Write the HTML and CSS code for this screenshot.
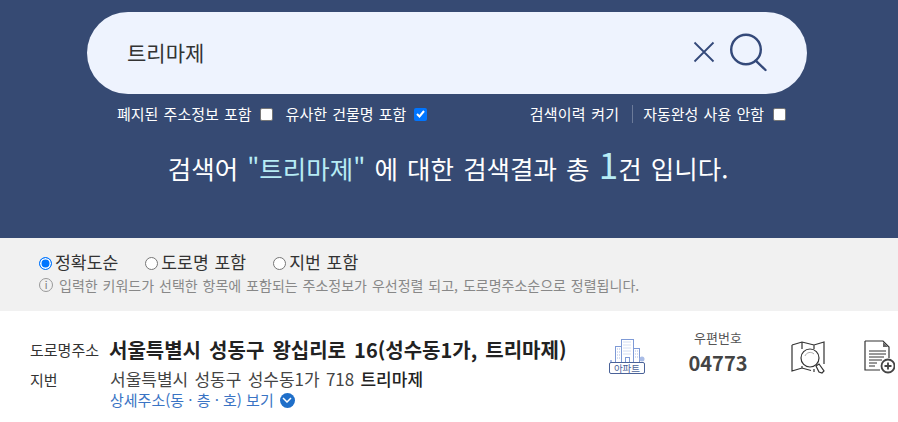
FILE: index.html
```html
<!DOCTYPE html>
<html lang="ko">
<head>
  <meta charset="UTF-8">
  <meta name="viewport" content="width=device-width, initial-scale=1.0">
  <title>도로명주소 검색</title>
  <link rel="stylesheet" href="styles.css">
</head>
<body>
  <header class="search-head">
    <div class="search-box">
      <span class="search-word">트리마제</span>
      <svg class="icon-clear" width="24" height="24" viewBox="0 0 24 24"><path d="M2.500 1.500L21.500 20.500M21.500 1.500L2.500 20.500" fill="none" stroke="#34497a" stroke-width="1.800"/></svg>
      <svg class="icon-search" width="40" height="40" viewBox="0 0 40 40"><circle cx="19" cy="16.500" r="14.800" fill="none" stroke="#34497a" stroke-width="2.400"/><path d="M28.700 27.700L38.500 37" fill="none" stroke="#34497a" stroke-width="2.400" stroke-linecap="round"/></svg>
    </div>
    <div class="search-options">
      <div class="option-group">
        <label class="option">폐지된 주소정보 포함 <span class="check"></span></label>
        <label class="option">유사한 건물명 포함 <span class="check on"><svg width="9" height="8" viewBox="0 0 9 8"><path d="M1 4L3.500 6.500L8 1" fill="none" stroke="#fff" stroke-width="2"/></svg></span></label>
      </div>
      <div class="option-group right">
        <span class="option history">검색이력 켜기</span>
        <label class="option">자동완성 사용 안함 <span class="check"></span></label>
      </div>
    </div>
    <p class="result-line">검색어 <em>"트리마제"</em> 에 대한 검색결과 총 <strong>1</strong>건 입니다.</p>
  </header>

  <section class="sort-bar">
    <div class="sort-options">
      <label class="radio-item"><span class="radio on"></span>정확도순</label>
      <label class="radio-item"><span class="radio"></span>도로명 포함</label>
      <label class="radio-item"><span class="radio"></span>지번 포함</label>
    </div>
    <p class="sort-note"><span class="info-mark">i</span>입력한 키워드가 선택한 항목에 포함되는 주소정보가 우선정렬 되고, 도로명주소순으로 정렬됩니다.</p>
  </section>

  <section class="result-row">
    <div class="addr">
      <div class="addr-line road">
        <span class="addr-label">도로명주소</span>
        <span class="addr-road">서울특별시 성동구 왕십리로 16(성수동1가, 트리마제)</span>
      </div>
      <div class="addr-line jibun">
        <span class="addr-label">지번</span>
        <div>
          <div class="addr-jibun">서울특별시 성동구 성수동1가 718 <span class="bld">트리마제</span></div>
          <div class="addr-more">상세주소(동 · 층 · 호) 보기 <span class="more-btn"><svg width="10" height="6" viewBox="0 0 10 6"><path d="M1 1L5 5L9 1" fill="none" stroke="#fff" stroke-width="1.500"/></svg></span></div>
        </div>
      </div>
    </div>

    <div class="apt">
      <svg width="36" height="24" viewBox="0 0 36 24">
        <g fill="#fff" stroke="#7e9ad6" stroke-width="1">
          <rect x="6.500" y="7.500" width="6" height="16"/>
          <rect x="24.500" y="9.500" width="6" height="14"/>
          <rect x="12.500" y="0.500" width="12" height="23"/>
          <rect x="16.500" y="18.500" width="4" height="5"/>
        </g>
        <path d="M8 10h3M8 13h3M8 16h3M8 19h3M26 12h3M26 15h3M26 18h3M14.500 3h8M14.500 6h8M14.500 9h8M14.500 12h8M14.500 15h8" stroke="#a9bce6" stroke-width="1" stroke-dasharray="1 1"/>
        <circle cx="33" cy="20" r="2.500" fill="#a9bce6"/>
        <rect x="1" y="21" width="2" height="3" fill="#a9bce6"/>
      </svg>
      <span class="apt-tag">아파트</span>
    </div>

    <div class="zip">
      <span class="zip-label">우편번호</span>
      <span class="zip-num">04773</span>
    </div>

    <svg class="icon-map" width="36" height="34" viewBox="0 0 36 34">
      <path d="M1 4L11 1L23 4L33 1V23M1 4V30L11 27L20 29.500M11 1V8M23 4V8M11 25V27M23 28V31" fill="none" stroke="#333" stroke-width="1.200"/>
      <circle cx="19" cy="17" r="9" fill="#fff" stroke="#333" stroke-width="1.200"/>
      <path d="M14 15a5.500 5.500 0 0 1 9 -2" fill="none" stroke="#aaa"/>
      <path d="M25 25L28 23L33 30L31 32L28 31Z" fill="#fff" stroke="#333" stroke-width="1.200"/>
    </svg>

    <svg class="icon-doc" width="31" height="34" viewBox="0 0 31 34">
      <path d="M1 1H19L25 7V18M1 1V30H16" fill="none" stroke="#333" stroke-width="1.200"/>
      <path d="M19 2V7H24Z" fill="#666"/>
      <path d="M5 11H22M5 14H22M5 17H20M5 20H18M5 23H13M5 26H11" stroke="#333" stroke-width="1"/>
      <circle cx="24" cy="26" r="6.500" fill="#fff" stroke="#444" stroke-width="1.800"/>
      <path d="M20.500 26H27.500M24 22.500V29.500" stroke="#444" stroke-width="1.800"/>
    </svg>
  </section>
</body>
</html>
```

FILE: styles.css
```css
* {
  box-sizing: border-box;
}
html, body {
  height: 422px;
  overflow: hidden;
}
body {
  margin: 0;
  font-family: "Noto Sans CJK KR", "Noto Sans", sans-serif;
  background-color: #fff;
  color: #333;
}
p {
  margin: 0;
}

.search-head {
  height: 238px;
  padding-top: 12px;
  background-color: #364a73;
  color: #fff;
}
.search-box {
  display: flex;
  align-items: center;
  width: 720px;
  height: 82px;
  margin-left: 87px;
  padding: 0 40px;
  border-radius: 41px;
  background-color: #eef3fe;
}
.search-word {
  flex: 1;
  padding-bottom: 2px;
  font-size: 21px;
  color: #333;
}
.icon-clear {
  margin-right: 11px;
}
.search-options {
  display: flex;
  justify-content: space-between;
  margin: 9px 0 0 117px;
  padding-right: 112px;
  font-size: 15px;
  word-spacing: 1px;
  line-height: 22px;
}
.option-group {
  display: flex;
  gap: 13px;
}
.option-group.right {
  gap: 0;
}
.option {
  display: flex;
  align-items: center;
  gap: 8px;
  white-space: nowrap;
}
.right .option {
  gap: 9px;
}
.history {
  padding-right: 13px;
  margin: 2px 10px 2px 0;
  border-right: 1px solid #6b7a99;
  height: 18px;
  line-height: 18px;
  letter-spacing: 0.2px;
}
.check {
  display: flex;
  align-items: center;
  justify-content: center;
  width: 13px;
  height: 13px;
  border: 1px solid #767676;
  border-radius: 2px;
  background-color: #fff;
}
.check.on {
  border: none;
  background-color: #0075ff;
}
.result-line {
  margin-top: 21px;
  padding-right: 2px;
  text-align: center;
  font-size: 25.500px;
  word-spacing: 2px;
  line-height: 44px;
}
.result-line em {
  font-style: normal;
  color: #b7ecf5;
}
.result-line strong {
  font-weight: 400;
  font-size: 35px;
  line-height: 30px;
  color: #b7ecf5;
}

.sort-bar {
  height: 73px;
  padding: 12px 0 0 39px;
  background-color: #f1f1f1;
}
.sort-options {
  display: flex;
  gap: 27px;
  font-size: 17.200px;
  word-spacing: 1px;
  line-height: 24px;
}
.radio-item {
  display: flex;
  align-items: center;
  gap: 3px;
}
.radio {
  width: 13px;
  height: 13px;
  border: 1px solid #767676;
  border-radius: 50%;
  background-color: #fff;
  margin-top: 2px;
}
.radio.on {
  border: 1.500px solid #0075ff;
  box-shadow: inset 0 0 0 1.500px #fff;
  background-color: #0075ff;
}
.sort-note {
  display: flex;
  align-items: center;
  margin-top: 1px;
  font-size: 14px;
  word-spacing: 1px;
  line-height: 20px;
  color: #888;
}
.info-mark {
  display: flex;
  align-items: center;
  justify-content: center;
  width: 14px;
  height: 14px;
  margin-right: 6px;
  border: 1px solid #999;
  border-radius: 50%;
  font-size: 10px;
  line-height: 1;
  color: #777;
}

.result-row {
  display: flex;
  align-items: flex-start;
  height: 111px;
  padding: 26px 0 0 30px;
}
.addr {
  width: 578px;
}
.addr-line {
  display: flex;
}
.addr-label {
  width: 80px;
  flex: none;
  font-size: 15px;
  color: #333;
}
.road {
  align-items: center;
  line-height: 26px;
}
.addr-road {
  margin-left: -1px;
  font-size: 20px;
  font-weight: 700;
  word-spacing: 2.500px;
  color: #222;
  white-space: nowrap;
}
.jibun {
  margin-top: 5px;
  line-height: 22px;
}
.jibun .addr-label {
  padding-top: 1px;
}
.addr-jibun {
  font-size: 17px;
  word-spacing: 1.500px;
  color: #444;
  white-space: nowrap;
}
.bld {
  font-weight: 500;
  color: #222;
}
.addr-more {
  display: flex;
  align-items: center;
  gap: 6px;
  font-size: 15px;
  line-height: 20px;
  color: #3a74c4;
}
.more-btn {
  display: flex;
  align-items: center;
  justify-content: center;
  width: 15px;
  height: 15px;
  border-radius: 50%;
  background-color: #1f6fc9;
}
.apt {
  display: flex;
  flex-direction: column;
  align-items: center;
  width: 36px;
  margin: 2px 0 0 1px;
}
.apt-tag {
  width: 36px;
  height: 12px;
  margin-top: -1px;
  border: 1px solid #4a6298;
  border-radius: 2px;
  background-color: #fff;
  font-size: 9.500px;
  line-height: 10px;
  text-align: center;
  color: #4a6298;
}
.zip {
  display: flex;
  flex-direction: column;
  align-items: center;
  width: 60px;
  margin: -7px 0 0 43px;
}
.zip-label {
  font-size: 13px;
  line-height: 16px;
  color: #555;
}
.zip-num {
  margin-top: 5px;
  font-size: 20px;
  font-weight: 700;
  line-height: 24px;
  color: #444;
}
.icon-map {
  margin: 4px 0 0 43px;
}
.icon-doc {
  margin: 3px 0 0 37px;
  flex: none;
}
```
